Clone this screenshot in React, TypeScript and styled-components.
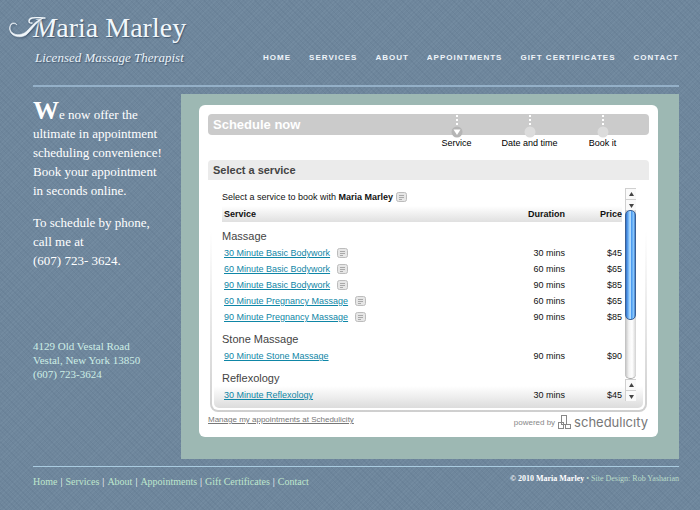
import React from "react";
import styled, { createGlobalStyle, css } from "styled-components";

const sans = '"Liberation Sans", Arial, sans-serif';
const serif = '"Liberation Serif", Georgia, serif';

const GlobalStyle = createGlobalStyle`
  *, *::before, *::after { box-sizing: border-box; }
  body {
    margin: 0;
    min-height: 100vh;
    background-color: #6e869c;
    background-image:
      repeating-linear-gradient(45deg, rgba(40, 62, 88, 0.07) 0 1px, transparent 1px 4px),
      repeating-linear-gradient(-45deg, rgba(180, 205, 220, 0.07) 0 1px, transparent 1px 3px);
    font-family: ${serif};
    color: #fff;
  }
  h1, h2, h3, p, ul, ol { margin: 0; padding: 0; font-weight: normal; }
  ul, ol { list-style: none; }
  a { text-decoration: none; color: inherit; }
`;

const Page = styled.div`
  padding: 0 21px 0 33px;
`;

const Header = styled.header`
  display: flex;
  justify-content: space-between;
  align-items: flex-end;
  height: 87px;
  padding-bottom: 17px;
  border-bottom: 2px solid #94b0c8;
`;

const Brand = styled.div`
  position: relative;
  white-space: nowrap;
  text-shadow: 1px 1px 1px rgba(40, 60, 85, 0.6);
`;

const BrandName = styled.h1`
  font-size: 28px;
  line-height: 32px;
  color: #f1f7fb;
`;

const SwashLetter = styled.span`
  font-style: italic;
`;

const Swash = styled.svg`
  position: absolute;
  left: -25px;
  top: 0;
  filter: drop-shadow(1px 1px 1px rgba(40, 60, 85, 0.6));
`;

const Tagline = styled.p`
  padding-left: 2px;
  margin-top: 4px;
  font-size: 13px;
  line-height: 20px;
  font-style: italic;
  color: #e9f2f8;
`;

const MainNav = styled.nav`
  display: flex;
  gap: 18px;
  font: bold 8px/20px ${sans};
  letter-spacing: 1px;
  text-transform: uppercase;
  color: #eef4f9;
`;

const Body = styled.div`
  display: grid;
  grid-template-columns: 148px minmax(0, 1fr);
  padding: 7px 0;
`;

const Sidebar = styled.aside`
  display: flex;
  flex-direction: column;
  padding-top: 7px;
`;

const Intro = styled.div`
  display: flex;
  flex-direction: column;
  gap: 13px;
  font-size: 13px;
  line-height: 19px;
  white-space: nowrap;

  p:first-child::first-letter {
    font-size: 26px;
    line-height: 19px;
    font-weight: bold;
  }
`;

const Address = styled.address`
  margin-top: 69px;
  font-size: 11px;
  line-height: 14px;
  font-style: normal;
  color: #cdeee6;
`;

const Panel = styled.main`
  padding: 11px 21px 22px 18px;
  background: #9db8b3;
`;

const Card = styled.section`
  padding: 9px 9px 8px;
  border-radius: 6px;
  background: #fff;
  color: #111;
  font-family: ${sans};
`;

const TitleBar = styled.div`
  display: flex;
  justify-content: space-between;
  align-items: flex-start;
  height: 21px;
  padding: 0 10px 0 5px;
  border-radius: 4px;
  background: #cbcbcb;
`;

const Title = styled.h2`
  font-size: 13px;
  line-height: 21px;
  font-weight: bold;
  color: #fff;
`;

const Steps = styled.ol`
  display: grid;
  grid-template-columns: repeat(3, 73px);
  font-size: 9px;
  line-height: 11px;
`;

const Step = styled.li`
  display: flex;
  flex-direction: column;
  align-items: center;
  color: #000;
`;

const SectionTitle = styled.h3`
  margin-top: 25px;
  padding-left: 5px;
  border-radius: 4px 4px 0 0;
  background: #ebebeb;
  font-size: 11px;
  line-height: 20px;
  font-weight: bold;
  color: #444;
`;

const ServiceFrame = styled.div`
  margin: 6px 2px 0;
  padding: 0 2px 2px;
  border: solid transparent;
  border-width: 0 2px 2px;
  border-radius: 0 0 8px 8px;
  background:
    linear-gradient(#fff, #fff) padding-box,
    linear-gradient(#fff 20%, #cfcfcf) border-box;
`;

const ServiceArea = styled.div`
  display: flex;
  align-items: flex-start;
  gap: 3px;
  padding: 2px 7px 5px 8px;
  border-radius: 0 0 5px 5px;
  background: linear-gradient(to top, #dcdcdc, #fff 22px);
`;

const ServiceList = styled.div`
  flex: 1;
  min-width: 0;
`;

const Prompt = styled.p`
  display: flex;
  align-items: center;
  gap: 3px;
  height: 18px;
  font-size: 9px;
  white-space: pre;
`;

const ServiceTable = styled.table`
  width: 100%;
  border-collapse: collapse;
  font-size: 9px;
  line-height: 12px;
  color: #111;
`;

const cell = css`
  height: 16px;
  padding: 0 0 0 2px;
  text-align: left;
  vertical-align: middle;
`;

const HeadCell = styled.th<{ $numeric?: boolean; $width?: number }>`
  ${cell}
  ${(p) => p.$width && `width: ${p.$width}px;`}
  ${(p) => p.$numeric && "text-align: right;"}
  background: linear-gradient(#fff, #e0e0e0);
`;

const GroupCell = styled.th`
  height: 23px;
  padding: 4px 0 0;
  text-align: left;
  font-size: 11px;
  font-weight: normal;
  color: #444;
`;

const Cell = styled.td<{ $numeric?: boolean }>`
  ${cell}
  ${(p) => p.$numeric && "text-align: right;"}
`;

const ServiceName = styled.div`
  display: flex;
  align-items: center;
  gap: 7px;
`;

const ServiceLink = styled.a`
  color: #0f86a6;
  text-decoration: underline;
`;

const ScrollBar = styled.div`
  display: flex;
  flex-direction: column;
  width: 11px;
  height: 213px;
`;

const ScrollButton = styled.button`
  display: flex;
  align-items: center;
  justify-content: center;
  height: 11px;
  padding: 0;
  border: solid #d0d0d0;
  border-width: 1px 0 0 1px;
  background: #fafafa;
`;

const ScrollTrack = styled.div`
  flex: 1;
  border-radius: 0 0 5px 5px;
  border-bottom: 1px solid #aaa;
  background: linear-gradient(to right, #bdbdbd, #f3f3f3 35%, #fff 65%, #d2d2d2);
`;

const ScrollThumb = styled.div`
  height: 110px;
  border: 1px solid #3a5f93;
  border-radius: 5px;
  background: linear-gradient(to right, #2f6fc9, #6bb0f5 25%, #c6e8ff 48%, #4a9af0 60%, #8cc8fb 85%, #3a78c8);
`;

const CardFooter = styled.div`
  display: flex;
  justify-content: space-between;
  align-items: flex-start;
  height: 17px;
  padding-right: 1px;
`;

const ManageLink = styled.a`
  font-size: 8px;
  line-height: 15px;
  color: #777;
  text-decoration: underline;
`;

const PoweredBy = styled.div`
  display: flex;
  align-items: center;
  gap: 3px;
  margin-top: 2px;
  font-size: 8px;
  color: #888;
`;

const Wordmark = styled.span`
  font: 13px/17px Inter, sans-serif;
  color: #777;
`;

const Footer = styled.footer`
  display: flex;
  justify-content: space-between;
  border-top: 1px solid #a9cbe0;
  line-height: 29px;
  white-space: nowrap;
`;

const FooterNav = styled.nav`
  display: flex;
  gap: 3px;
  font-size: 10px;
  color: #fff;

  a { color: #bfe6cd; }
`;

const Credit = styled.p`
  font-size: 8px;
  line-height: 24px;
  color: #b9dcc8;

  strong { color: #fff; }
`;

const NoteIcon = () => (
  <svg width="11" height="10" viewBox="0 0 11 10" aria-hidden="true">
    <rect x="0.5" y="0.5" width="10" height="9" rx="2" fill="#e6e6e6" stroke="#bcbcbc" />
    <path d="M3 3.5h5M3 5.5h5M3 7.5h3" stroke="#999" strokeWidth="0.8" />
  </svg>
);

const StepMarker = ({ active }: { active?: boolean }) => (
  <svg width="12" height="24" viewBox="0 0 12 24" aria-hidden="true">
    <path d="M5 1h2v2h-2zM5 5h2v2h-2zM5 9h2v2h-2z" fill="#fff" />
    <circle cx="6" cy="18" r="5.5" fill={active ? "#b5b5b5" : "#dcdcdc"} />
    {active && <path d="M2.5 15.5h7l-3.5 5.5z" fill="#fff" />}
  </svg>
);

const Arrow = ({ down }: { down?: boolean }) => (
  <svg width="5" height="5" viewBox="0 0 5 5" aria-hidden="true">
    <path d={down ? "M0 1h5l-2.5 4z" : "M0 4h5l-2.5-4z"} fill="#444" />
  </svg>
);

const navItems = ["Home", "Services", "About", "Appointments", "Gift Certificates", "Contact"];

const steps = ["Service", "Date and time", "Book it"];

const groups = [
  {
    name: "Massage",
    rows: [
      { name: "30 Minute Basic Bodywork", mins: 30, price: 45, note: true },
      { name: "60 Minute Basic Bodywork", mins: 60, price: 65, note: true },
      { name: "90 Minute Basic Bodywork", mins: 90, price: 85, note: true },
      { name: "60 Minute Pregnancy Massage", mins: 60, price: 65, note: true },
      { name: "90 Minute Pregnancy Massage", mins: 90, price: 85, note: true },
    ],
  },
  { name: "Stone Massage", rows: [{ name: "90 Minute Stone Massage", mins: 90, price: 90, note: false }] },
  { name: "Reflexology", rows: [{ name: "30 Minute Reflexology", mins: 30, price: 45, note: false }] },
];

export default function App() {
  return (
    <>
      <GlobalStyle />
      <Page>
        <Header>
          <Brand>
            <Swash width="50" height="30" viewBox="0 0 50 30" aria-hidden="true">
              <path
                d="M9 13C6 10 2 12 2 16C2 21 8 24 14 22C21 20 24 10 35 6C28 10 24 18 18 23C13 26 7 25 4 22C1 19 1 15 3 12C5 10 8 11 9 13Z"
                fill="#f1f7fb"
                stroke="#f1f7fb"
                strokeWidth="0.6"
                strokeLinejoin="round"
              />
              <path
                d="M24 11C20 12 20 7 24 6C28 5 32 6 37 6"
                fill="none"
                stroke="#f1f7fb"
                strokeWidth="1.4"
                strokeLinecap="round"
              />
            </Swash>
            <BrandName>
              <SwashLetter>M</SwashLetter>aria Marley
            </BrandName>
            <Tagline>Licensed Massage Therapist</Tagline>
          </Brand>
          <MainNav aria-label="Main">
            {navItems.map((item) => (
              <a key={item} href="#">{item}</a>
            ))}
          </MainNav>
        </Header>

        <Body>
          <Sidebar>
            <Intro>
              <p>
                We now offer the<br />
                ultimate in appointment<br />
                scheduling convenience!<br />
                Book your appointment<br />
                in seconds online.
              </p>
              <p>
                To schedule by phone,<br />
                call me at<br />
                (607) 723- 3624.
              </p>
            </Intro>
            <Address>
              4129 Old Vestal Road<br />
              Vestal, New York 13850<br />
              (607) 723-3624
            </Address>
          </Sidebar>

          <Panel>
            <Card>
              <TitleBar>
                <Title>Schedule now</Title>
                <Steps>
                  {steps.map((step, i) => (
                    <Step key={step}>
                      <StepMarker active={i === 0} />
                      {step}
                    </Step>
                  ))}
                </Steps>
              </TitleBar>
              <SectionTitle>Select a service</SectionTitle>
              <ServiceFrame>
                <ServiceArea>
                  <ServiceList>
                    <Prompt>
                      <span>Select a service to book with <strong>Maria Marley</strong></span>
                      <NoteIcon />
                    </Prompt>
                    <ServiceTable>
                      <thead>
                        <tr>
                          <HeadCell>Service</HeadCell>
                          <HeadCell $numeric $width={60}>Duration</HeadCell>
                          <HeadCell $numeric $width={57}>Price</HeadCell>
                        </tr>
                      </thead>
                      {groups.map((group) => (
                        <tbody key={group.name}>
                          <tr>
                            <GroupCell colSpan={3} scope="rowgroup">{group.name}</GroupCell>
                          </tr>
                          {group.rows.map((row) => (
                            <tr key={row.name}>
                              <Cell>
                                <ServiceName>
                                  <ServiceLink href="#">{row.name}</ServiceLink>
                                  {row.note && <NoteIcon />}
                                </ServiceName>
                              </Cell>
                              <Cell $numeric>{row.mins} mins</Cell>
                              <Cell $numeric>${row.price}</Cell>
                            </tr>
                          ))}
                        </tbody>
                      ))}
                    </ServiceTable>
                  </ServiceList>
                  <ScrollBar>
                    <ScrollButton aria-label="Scroll up"><Arrow /></ScrollButton>
                    <ScrollButton aria-label="Scroll down"><Arrow down /></ScrollButton>
                    <ScrollTrack><ScrollThumb /></ScrollTrack>
                    <ScrollButton aria-label="Scroll up"><Arrow /></ScrollButton>
                    <ScrollButton aria-label="Scroll down"><Arrow down /></ScrollButton>
                  </ScrollBar>
                </ServiceArea>
              </ServiceFrame>
              <CardFooter>
                <ManageLink href="#">Manage my appointments at Schedulicity</ManageLink>
                <PoweredBy>
                  powered by
                  <svg width="13" height="15" viewBox="0 0 13 15" fill="none" stroke="#888" aria-hidden="true">
                    <rect x="3.5" y="0.5" width="5" height="9" />
                    <rect x="0.5" y="7.5" width="5" height="6" />
                    <rect x="7.5" y="9.5" width="5" height="4" />
                  </svg>
                  <Wordmark>schedulıcıty</Wordmark>
                </PoweredBy>
              </CardFooter>
            </Card>
          </Panel>
        </Body>

        <Footer>
          <FooterNav aria-label="Footer">
            {navItems.map((item, i) => (
              <React.Fragment key={item}>
                {i > 0 && <span>|</span>}
                <a href="#">{item}</a>
              </React.Fragment>
            ))}
          </FooterNav>
          <Credit>
            <strong>© 2010 Maria Marley</strong> • <a href="#">Site Design: Rob Yasharian</a>
          </Credit>
        </Footer>
      </Page>
    </>
  );
}
